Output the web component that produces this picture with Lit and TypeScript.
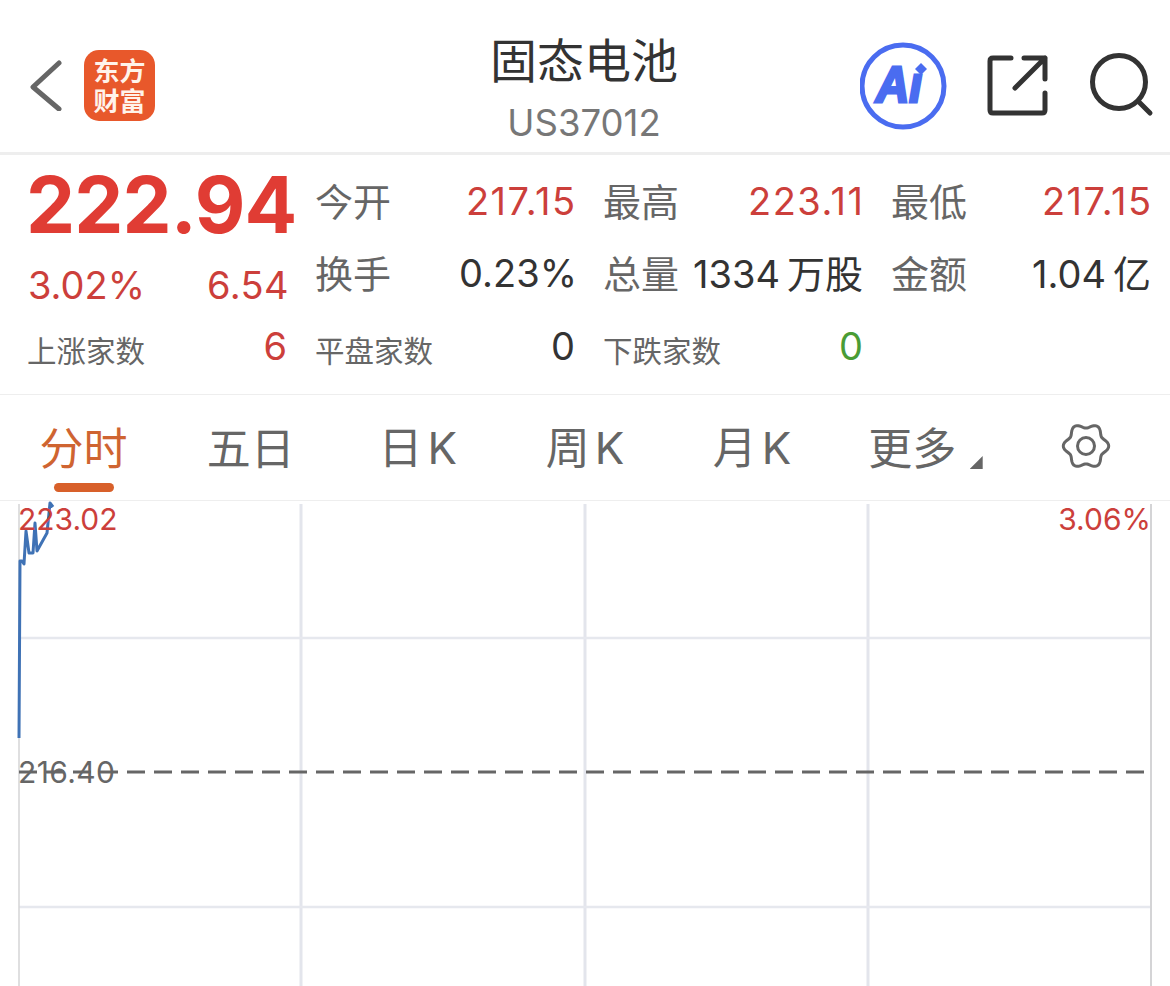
import { LitElement, html, css, svg } from "lit";
import { customElement } from "lit/decorators.js";

const gearPath = (() => {
  const pts: string[] = [];
  for (let i = 0; i < 120; i++) {
    const t = (i / 120) * Math.PI * 2;
    const r = 20.3 + 2.4 * Math.cos(6 * t);
    pts.push(`${(r * Math.cos(t)).toFixed(2)},${(r * Math.sin(t)).toFixed(2)}`);
  }
  return "M" + pts.join("L") + "Z";
})();

const VERT = [301, 585, 868];
const HORIZ = [137, 406];
const TICK = "19,237 20,60 22,60 24,63 26,30 29,52 33,52 35,22 37,50 47,32 50,2 53,6";

@customElement("app-root")
export class AppRoot extends LitElement {
  static styles = css`
    :host {
      display: block;
      width: 1170px;
      height: 986px;
      overflow: hidden;
      background: #fff;
      font-family: Inter, "Noto Sans CJK SC", sans-serif;
      color: #333;
    }
    .header {
      height: 152px;
      display: grid;
      grid-template-columns: 1fr auto 1fr;
      border-bottom: 3px solid #eeeeee;
    }
    .left {
      display: flex;
      align-items: center;
      padding: 0 0 0 30px;
      gap: 19px;
      height: 170px;
    }
    .logo {
      width: 71px;
      height: 71px;
      border-radius: 15px;
      background: #e8582b;
      color: #fff3ea;
      font: 700 26px/30px "Noto Sans CJK SC", sans-serif;
      text-align: center;
      display: flex;
      flex-direction: column;
      justify-content: center;
    }
    .title {
      text-align: center;
      padding: 29px 2px 0 0;
    }
    .title h1 {
      margin: 0;
      font: 400 47px/58px "Noto Sans CJK SC", sans-serif;
      color: #333;
    }
    .title p {
      margin: 14px 0 0;
      font: 400 36.5px/44px Inter, sans-serif;
      color: #777;
    }
    .right {
      display: flex;
      justify-content: flex-end;
    }
    .right svg {
      display: block;
    }
    .stats {
      height: 240px;
      box-sizing: border-box;
      padding: 10px 19px 0 28px;
      border-bottom: 1px solid #eeeeee;
      display: grid;
      grid-template-columns: repeat(4, 259px);
      grid-template-rows: 72px 72px 74px;
      column-gap: 29px;
    }
    .quote {
      grid-row: 1 / 3;
      display: flex;
      flex-direction: column;
    }
    .price {
      font-size: 78px;
      font-weight: 700;
      line-height: 78px;
      color: #e03c34;
      white-space: nowrap;
      letter-spacing: -0.9px;
      margin: 1px 0 0 -2px;
    }
    .sub {
      display: flex;
      justify-content: space-between;
      font-size: 38px;
      line-height: 44px;
      color: #cc3f3b;
      margin-top: 19px;
    }
    .wide {
      letter-spacing: 0.4px;
      margin-right: -2px;
    }
    .cell {
      display: flex;
      justify-content: space-between;
      align-items: center;
      white-space: nowrap;
    }
    .lab {
      font: 400 38px/44px "Noto Sans CJK SC", sans-serif;
      color: #666;
      padding-bottom: 3px;
      margin-left: -1px;
    }
    .lab.small {
      font-size: 29.5px;
      padding: 6px 0 0;
    }
    .val {
      font-size: 38px;
      line-height: 44px;
      color: #333;
    }
    .pct {
      margin-right: -2px;
    }
    .one {
      letter-spacing: 1.5px;
      margin-right: -1.5px;
    }
    .unit {
      font-family: "Noto Sans CJK SC", sans-serif;
      margin-left: 7px;
    }
    .red {
      color: #cc3f3b;
    }
    .green {
      color: #4a9c35;
    }
    .tabs {
      height: 105px;
      display: grid;
      grid-template-columns: repeat(7, 1fr);
      border-bottom: 1px solid #eeeeee;
    }
    .tab {
      position: relative;
      display: flex;
      align-items: center;
      justify-content: center;
      padding-bottom: 3px;
      font: 400 44px/52px "Noto Sans CJK SC", sans-serif;
      color: #666;
    }
    .tab.on {
      color: #cf6431;
    }
    .tab.on::after {
      content: "";
      position: absolute;
      left: 54px;
      width: 60px;
      top: 88px;
      height: 9px;
      border-radius: 5px;
      background: #d8602a;
    }
    .tab.more {
      padding-right: 14px;
    }
    .tri {
      position: absolute;
      left: 134px;
      top: 61px;
      width: 13px;
      height: 13px;
      background: #666;
      clip-path: polygon(100% 0, 100% 100%, 0 100%);
    }
    .lat {
      font-family: Inter, sans-serif;
      margin-left: 5px;
    }
    .chart {
      position: relative;
      height: 485px;
    }
    .chart svg {
      display: block;
    }
    .tag {
      position: absolute;
      font-size: 30px;
      line-height: 34px;
    }
    .t-hi {
      left: 18px;
      top: 1px;
      color: #cc3f3b;
    }
    .t-pct {
      right: 19px;
      top: 1px;
      color: #cc3f3b;
    }
    .t-mid {
      left: 18px;
      top: 254px;
      color: #666;
      letter-spacing: 0.4px;
    }
  `;

  private stat(label: string, value: unknown, cls = "") {
    return html`<div class="cell">
      <span class="lab">${label}</span><span class="val ${cls}">${value}</span>
    </div>`;
  }
  private small(label: string, value: string, cls = "") {
    return html`<div class="cell">
      <span class="lab small">${label}</span><span class="val ${cls}">${value}</span>
    </div>`;
  }

  render() {
    return html`
      <div class="header">
        <div class="left">
          <svg width="35" height="52" viewBox="0 -1 35 52">
            <path d="M29 3 L3 27 L29 49" fill="none" stroke="#666" stroke-width="5" stroke-linecap="round" stroke-linejoin="round" />
          </svg>
          <div class="logo"><span>东方</span><span>财富</span></div>
        </div>
        <div class="title">
          <h1>固态电池</h1>
          <p>US37012</p>
        </div>
        <div class="right">
          <svg width="310" height="152" viewBox="860 0 310 152">
            <circle cx="903" cy="86" r="41" fill="none" stroke="#4a6cf0" stroke-width="5" />
            <text transform="translate(876 102) scale(.92 1)" font-family="Liberation Sans" font-size="50" font-weight="700" font-style="italic" fill="#4a6cf0" stroke="#4a6cf0" stroke-width="3">Aı</text>
            <path d="M921 63 L927 69 L921 75 L915 69 Z" fill="#4a6cf0" />
            <path d="M1011 58 H993 Q990 58 990 61 V110 Q990 113 993 113 H1042 Q1045 113 1045 110 V93 M1024 58 H1045 V79 M1045 58 L1015 88" fill="none" stroke="#333" stroke-width="5" stroke-linecap="round" stroke-linejoin="round" />
            <circle cx="1119" cy="82" r="26.5" fill="none" stroke="#333" stroke-width="5" />
            <path d="M1139 102 L1150 113" stroke="#333" stroke-width="5" stroke-linecap="round" />
          </svg>
        </div>
      </div>

      <div class="stats">
        <div class="quote">
          <div class="price">222.94</div>
          <div class="sub"><span>3.02%</span><span class="wide">6.54</span></div>
        </div>
        ${this.stat("今开", "217.15", "red one")}
        ${this.stat("最高", "223.11", "red one")}
        ${this.stat("最低", "217.15", "red one")}
        ${this.stat("换手", "0.23%", "pct")}
        ${this.stat("总量", html`1334<span class="unit">万股</span>`)}
        ${this.stat("金额", html`1.04<span class="unit">亿</span>`)}
        ${this.small("上涨家数", "6", "red")}
        ${this.small("平盘家数", "0")}
        ${this.small("下跌家数", "0", "green")}
      </div>

      <div class="tabs">
        <div class="tab on">分时</div>
        <div class="tab">五日</div>
        <div class="tab"><span>日<span class="lat">K</span></span></div>
        <div class="tab"><span>周<span class="lat">K</span></span></div>
        <div class="tab"><span>月<span class="lat">K</span></span></div>
        <div class="tab more">更多<span class="tri"></span></div>
        <div class="tab">
          <svg width="52" height="52" viewBox="-26 -26 52 52">
            <path d=${gearPath} fill="none" stroke="#666" stroke-width="3" stroke-linejoin="round" />
            <circle r="8.5" fill="none" stroke="#666" stroke-width="3" />
          </svg>
        </div>
      </div>

      <div class="chart">
        <svg width="1170" height="485" viewBox="0 0 1170 485">
          ${VERT.map((x) => svg`<line x1=${x} x2=${x} y1="3" y2="485" stroke="#e3e5ec" stroke-width="3" />`)}
          ${HORIZ.map((y) => svg`<line x1="19" x2="1151" y1=${y} y2=${y} stroke="#e6e8ee" stroke-width="2.5" />`)}
          <line x1="19" x2="19" y1="3" y2="485" stroke="#d4d4d6" stroke-width="1.5" />
          <line x1="1151" x2="1151" y1="3" y2="485" stroke="#d4d4d6" stroke-width="2" />
          <line x1="19" x2="1145" y1="271" y2="271" stroke="#666" stroke-width="3" stroke-dasharray="18 9" />
          <polyline points=${TICK} fill="none" stroke="#3f72b5" stroke-width="3" stroke-linejoin="round" />
        </svg>
        <span class="tag t-hi">223.02</span>
        <span class="tag t-pct">3.06%</span>
        <span class="tag t-mid">216.40</span>
      </div>
    `;
  }
}
